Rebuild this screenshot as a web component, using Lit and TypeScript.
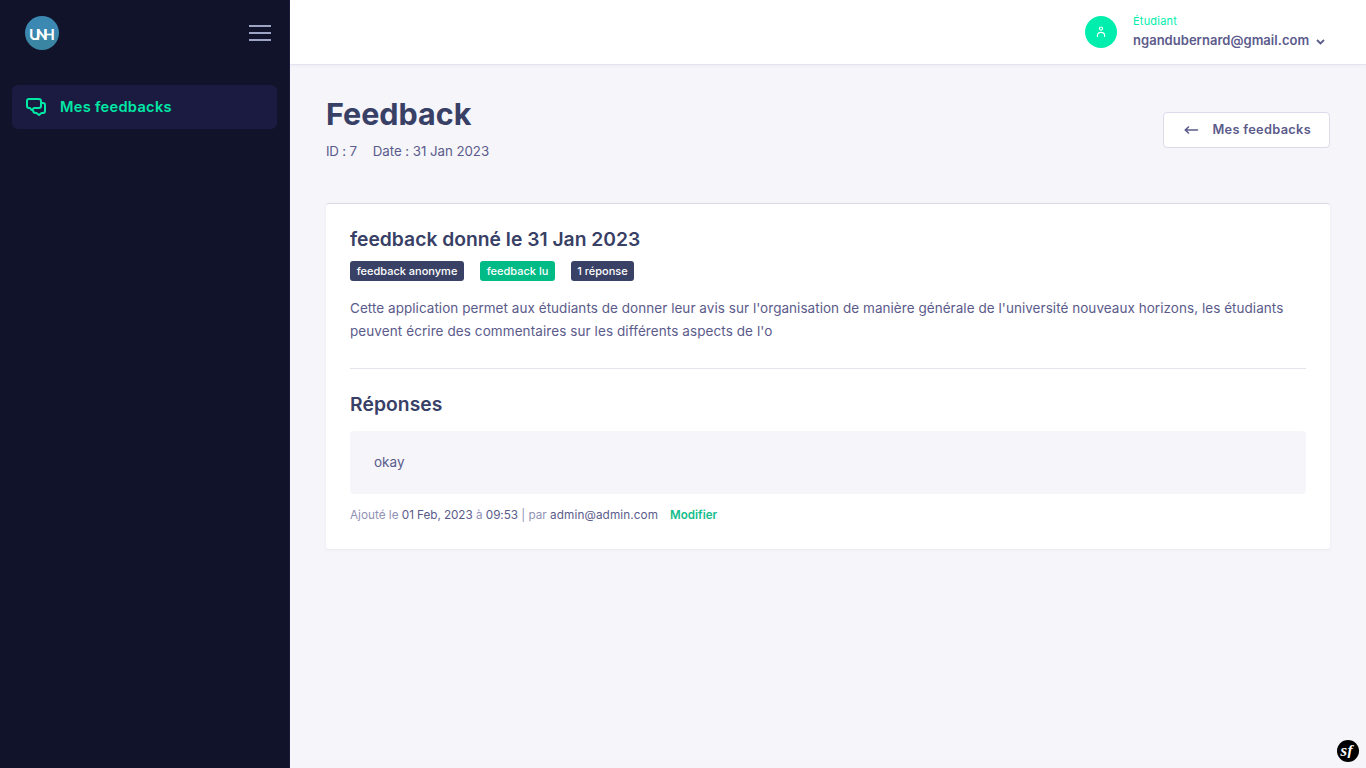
import { LitElement, html, css } from "lit";
import { customElement } from "lit/decorators.js";

@customElement("app-sidebar")
class AppSidebar extends LitElement {
  static styles = css`
    :host { display: flex; flex-direction: column; box-sizing: border-box; width: 290px; flex: none; background: #11132b; border-right: 1px solid #1b1c40; }
    .head { display: flex; justify-content: space-between; align-items: center; height: 64px; padding: 2px 17px 0 25px; box-sizing: border-box; }
    svg { display: block; }
    .mark { font-family: Lato, sans-serif; font-weight: 700; font-size: 15.5px; fill: #fff; }
    .menu { padding: 21px 12px 0; }
    .item { display: flex; align-items: center; height: 44px; border-radius: 6px; background: #1b1b42; color: #00e8a5; padding-left: 13px; }
    .label { margin-left: 13px; font-size: 14.6px; font-weight: 600; line-height: 20px; letter-spacing: .3px; white-space: nowrap; }
  `;
  render() {
    return html`
      <div class="head">
        <svg width="34" height="34" viewBox="0 0 34 34">
          <defs><linearGradient id="g" x1="0" y1="0" x2="0" y2="1"><stop offset=".45" stop-color="#3b88b3" /><stop offset=".75" stop-color="#3a86a2" /></linearGradient></defs>
          <circle cx="17" cy="17" r="17" fill="url(#g)" />
          <text class="mark" x="4" y="23.5" textLength="26" lengthAdjust="spacing">UNH</text>
        </svg>
        <svg width="24" height="20" viewBox="0 0 24 20"><path d="M1 3H23M1 10H23M1 17H23" stroke="#9ea5c4" stroke-width="2" /></svg>
      </div>
      <div class="menu">
        <div class="item">
          <svg width="22" height="20" viewBox="0 0 22 20" fill="none" stroke="#00e8a5" stroke-width="2" stroke-linejoin="round" stroke-linecap="round">
            <path d="M4 2H13.5Q16 2 16 4V9Q16 11 14 11H9L6.5 13L5 11H4Q2 11 2 9V4Q2 2 4 2Z" />
            <path d="M16.5 6H18Q20 6 20 8V14Q20 16 18 16H16.5L14 18L11.5 16H10.5Q8.5 16 8 13.5" />
          </svg>
          <span class="label">Mes feedbacks</span>
        </div>
      </div>`;
  }
}

@customElement("app-header")
class AppHeader extends LitElement {
  static styles = css`
    :host { display: flex; justify-content: flex-end; align-items: center; box-sizing: border-box; height: 65px; flex: none; background: #fff; border-bottom: 1px solid #e5e3f0; box-shadow: 0 1px 3px rgba(54, 74, 99, .05); padding-right: 41px; }
    .avatar { display: flex; align-items: center; justify-content: center; width: 32px; height: 32px; border-radius: 50%; background: #00eead; }
    .info { margin-left: 16px; padding-bottom: 2px; white-space: nowrap; }
    .role { font-size: 11px; line-height: 14px; letter-spacing: .22px; color: #00eead; }
    .mail { display: flex; align-items: center; margin-top: 4px; font-size: 13px; line-height: 16px; font-weight: 600; color: #5c5b8c; width: 192px; justify-content: space-between; letter-spacing: .03px; }
    .mail svg { margin-top: 3px; }
  `;
  render() {
    return html`
      <div class="avatar">
        <svg width="10" height="12" viewBox="0 0 10 12" fill="none" stroke="#fff" stroke-width="1.1"><circle cx="5" cy="2.6" r="1.6" /><path d="M1.4 11V9.5Q1.4 6.4 5 6.4Q8.6 6.4 8.6 9.5V11" /></svg>
      </div>
      <div class="info">
        <div class="role">Étudiant</div>
        <div class="mail"><span>ngandubernard@gmail.com</span>
          <svg width="9" height="6" viewBox="0 0 9 6"><path d="M1 1L4.5 4.5L8 1" fill="none" stroke="#5c5b8c" stroke-width="1.8" /></svg>
        </div>
      </div>`;
  }
}

@customElement("feedback-page")
class FeedbackPage extends LitElement {
  static styles = css`
    :host { display: block; padding: 31px 36px 0; color: #5b5b8b; white-space: nowrap; }
    .head { display: flex; justify-content: space-between; align-items: center; height: 68px; }
    .heading { margin-bottom: 5px; }
    h1 { margin: 0; font-size: 30.5px; line-height: 38px; font-weight: 700; color: #384066; }
    h2 { margin: 0; font-size: 19.3px; line-height: 24px; font-weight: 600; color: #384066; }
    .sub { letter-spacing: .08px; }
    .meta { display: flex; gap: 16px; margin-top: 8px; font-size: 13.3px; line-height: 20px; }
    .id { letter-spacing: -.2px; }
    .date { letter-spacing: -.05px; }
    .back { display: flex; align-items: center; box-sizing: border-box; width: 167px; height: 36px; border: 1px solid #dbdbeb; border-radius: 4px; background: #fff; padding: 0 18px 2px 20px; justify-content: space-between; font-size: 12.8px; letter-spacing: .3px; font-weight: 600; }
    .back svg { margin-top: 2px; }
    .card { box-sizing: border-box; margin-top: 39px; height: 346px; background: #fff; border-top: 1px solid #dadbe6; border-radius: 3px; padding: 23px 24px; box-shadow: 0 1px 3px rgba(54, 74, 99, .06); }
    .tags { display: flex; gap: 16px; margin-top: 10px; }
    .tag { display: block; box-sizing: border-box; height: 20px; line-height: 20px; border-radius: 3px; background: #3a4166; color: #fff; font-size: 11px; font-weight: 500; text-align: center; }
    .anon { width: 114px; }
    .read { width: 75px; background: #00bb86; }
    .count { width: 63px; }
    .text { margin: 16px 0 0; font-size: 13.5px; line-height: 23px; }
    .text span { display: block; letter-spacing: .043px; }
    .text .l2 { letter-spacing: .085px; }
    .replies { margin-top: 25px; border-top: 1px solid #e5e5f1; padding-top: 23px; }
    .reply { margin-top: 15px; height: 63px; line-height: 63px; box-sizing: border-box; padding-left: 24px; border-radius: 4px; background: #f5f5fa; font-size: 13.5px; }
    .foot { display: flex; margin-top: 12px; font-size: 11.75px; line-height: 19px; color: #9291b5; }
    .foot b { font-weight: 400; color: #5b5b8b; }
    .foot .when { letter-spacing: -.08px; }
    .foot .who { letter-spacing: .1px; }
    .edit { margin-left: 12px; color: #13bd8c; font-weight: 600; font-size: 11.6px; }
  `;
  render() {
    return html`
      <div class="head">
        <div class="heading"><h1>Feedback</h1><div class="meta"><span class="id">ID : 7</span><span class="date">Date : 31 Jan 2023</span></div></div>
        <div class="back">
          <svg width="15" height="10" viewBox="0 0 15 10" fill="none" stroke="#5b5b8b" stroke-width="1.6" stroke-linecap="round" stroke-linejoin="round"><path d="M13.5 5H1.5M4.5 2L1.2 5L4.5 8" /></svg>
          <span>Mes feedbacks</span>
        </div>
      </div>
      <div class="card">
        <h2 class="title">feedback donné le 31 Jan 2023</h2>
        <div class="tags"><span class="tag anon">feedback anonyme</span><span class="tag read">feedback lu</span><span class="tag count">1 réponse</span></div>
        <p class="text"><span class="l1">Cette application permet aux étudiants de donner leur avis sur l'organisation de manière générale de l'université nouveaux horizons, les étudiants</span><span class="l2">peuvent écrire des commentaires sur les différents aspects de l'o</span></p>
        <div class="replies">
          <h2 class="sub">Réponses</h2>
          <div class="reply">okay</div>
          <div class="foot"><span class="added">Ajouté le <b class="when">01 Feb, 2023</b> à <b class="when">09:53</b> | par <b class="who">admin@admin.com</b></span><span class="edit">Modifier</span></div>
        </div>
      </div>`;
  }
}

@customElement("app-root")
class AppRoot extends LitElement {
  static styles = css`
    :host { display: flex; position: relative; width: 100%; height: 768px; overflow: hidden; background: #f5f5fa; font-family: Inter, "Liberation Sans", sans-serif; }
    .main { flex: 1; min-width: 0; display: flex; flex-direction: column; }
    .badge { position: absolute; right: 7px; bottom: 6px; width: 22px; height: 22px; border-radius: 50%; background: #000; }
    .badge svg { display: block; }
    .badge text { font-family: "Liberation Serif", serif; font-style: italic; font-weight: 700; fill: #fff; }
  `;
  render() {
    return html`<app-sidebar></app-sidebar><div class="main"><app-header></app-header><feedback-page></feedback-page></div>
      <div class="badge">
        <svg width="22" height="22" viewBox="0 0 22 22"><text x="3.6" y="15.6" font-size="17">s</text><text x="10.6" y="14.6" font-size="15.5">f</text></svg>
      </div>`;
  }
}
